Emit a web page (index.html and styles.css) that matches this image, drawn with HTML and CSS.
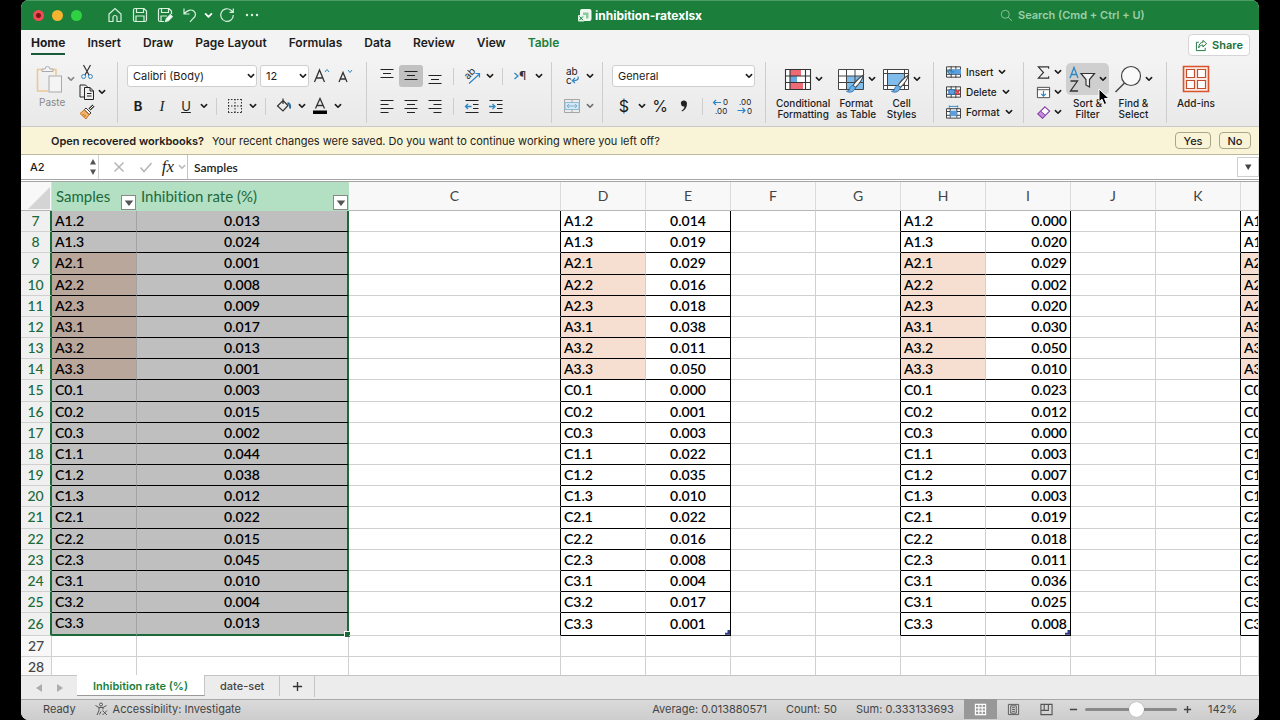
FILE: index.html
```html
<!DOCTYPE html>
<html lang="en">
<head>
	<meta charset="utf-8">
	<title>inhibition-ratexlsx</title>
	<link rel="stylesheet" href="styles.css">
</head>
<body>
	<!-- shared icons -->
	<svg class="defs" aria-hidden="true">
		<symbol id="chev" viewBox="0 0 8 8"><path d="M1.4 2.6L4 5.2l2.6-2.6" fill="none" stroke="currentColor" stroke-width="1.6" stroke-linecap="round" stroke-linejoin="round"/></symbol>
		<symbol id="brush" viewBox="0 0 20 20"><path d="M18.500 1C14 4 10 8 8 11.500l2.500 2C14 10 17.500 5.500 18.500 1z" fill="#fff" stroke="#444" stroke-width="1.100"/><path d="M8 11.500c-2 .2-3 1.500-3.300 3.200C4.500 16 3.500 17 1.500 17.300c3 1.600 7.500 1.200 9-3.800z" fill="#6fb1e4" stroke="#2f76b5"/></symbol>
	</svg>

	<div class="window">
		<header class="titlebar">
			<div class="title-left">
				<span class="light red"></span><span class="light yellow"></span><span class="light green"></span>
				<nav class="quick">
					<button aria-label="Home"><svg viewBox="0 0 16 16"><path d="M2 7l6-5.500L14 7v7.500h-4V10.500a2 2 0 0 0-4 0v4H2z"/></svg></button>
					<button aria-label="Save"><svg viewBox="0 0 16 16"><path d="M1.500 3a1.500 1.500 0 0 1 1.500-1.500h9L14.500 4v9a1.500 1.500 0 0 1-1.500 1.500H3A1.500 1.500 0 0 1 1.500 13zM4.500 1.500v4h7v-4M4 14.500V9h8v5.500"/></svg></button>
					<button aria-label="Save as"><svg viewBox="0 0 16 16"><path d="M7 14.500H3A1.500 1.500 0 0 1 1.500 13V3A1.500 1.500 0 0 1 3 1.500h9L14.500 4v3M4.500 1.500v4h7v-4M4 14.500V9h6"/><path d="M8.500 14.500l.8-2.800 4-4 2 2-4 4z" fill="#fff"/></svg></button>
					<button aria-label="Undo"><svg viewBox="0 0 16 16"><path d="M2 1.500v5.500h5.500M2.300 6.700C5 3.500 9 1.800 11.700 4c2.600 2.200 2.200 5-.3 7.200L8 14.800"/></svg></button>
					<button class="tiny" aria-label="Undo list"><svg viewBox="0 0 8 8"><use href="#chev"/></svg></button>
					<button aria-label="Redo"><svg viewBox="0 0 16 16"><path d="M14.300 8A6.300 6.300 0 1 1 12 3.200L14 5M14.300 1.500V5.300h-3.800"/></svg></button>
					<button aria-label="More"><svg viewBox="0 0 16 16"><g fill="#d9f0df" stroke="none"><circle cx="3" cy="8" r="1.200"/><circle cx="8" cy="8" r="1.200"/><circle cx="13" cy="8" r="1.200"/></g></svg></button>
				</nav>
			</div>
			<h1 class="doc-name">
				<svg viewBox="0 0 14 14"><rect x="2" y="1" width="11.500" height="12" rx="2" fill="#eef8f0"/><path d="M5 4.500h5.500v6H8V7H5z" fill="#8cc89c"/><rect x="0" y="7" width="6.500" height="6.500" rx="1" fill="#e3f3e7"/><path d="M1.500 8.500l3.400 3.600m0-3.600l-3.400 3.600" stroke="#1b7f3b"/></svg>
				inhibition-ratexlsx
			</h1>
			<label class="search">
				<svg viewBox="0 0 14 14"><circle cx="5.700" cy="5.700" r="4.300"/><path d="M9 9l4 4"/></svg>
				<input type="search" placeholder="Search (Cmd + Ctrl + U)" aria-label="Search">
			</label>
		</header>

		<nav class="menu">
			<a href="#" class="current">Home</a>
			<a href="#">Insert</a>
			<a href="#">Draw</a>
			<a href="#">Page Layout</a>
			<a href="#">Formulas</a>
			<a href="#">Data</a>
			<a href="#">Review</a>
			<a href="#">View</a>
			<a href="#" class="context">Table</a>
			<button class="share"><svg viewBox="0 0 14 14"><path d="M4 3.500H1.500v9h9.500V9.500M8.500 1.500l4 3.500-4 3.500V6.500C6.500 6.500 5 7.500 4 9.500c0-3.500 1.800-6 4.500-6z"/></svg>Share</button>
		</nav>

		<section class="ribbon">
			<div class="group clip">
				<button class="paste">
					<span class="pair">
						<svg class="i28" viewBox="0 0 28 28"><path d="M7 4.500H1.500V26H12M20 10V4.500h-5" fill="none" stroke="#ecc894" stroke-width="1.600"/><path d="M6 6.500V4h3a2.500 2.500 0 0 1 5 0h3v2.500z" fill="#f4f4f4" stroke="#aaa"/><rect x="13" y="11" width="12.500" height="16" fill="#f4f4f4" stroke="#aaa"/></svg>
						<svg class="dd-icon" viewBox="0 0 8 8"><use href="#chev"/></svg>
					</span>
					Paste
				</button>
				<div class="stack">
					<div class="line"><button class="sm" aria-label="Cut"><svg viewBox="0 0 16 16"><path d="M4.500 1l5.500 10M11.500 1L6 11" stroke="#333" stroke-width="1.200"/><circle cx="4.600" cy="12.500" r="2" stroke="#2b86c5"/><circle cx="11.400" cy="12.500" r="2" stroke="#2b86c5"/></svg></button></div>
					<div class="line"><button class="sm" aria-label="Copy"><svg viewBox="0 0 16 16"><path d="M5 13H1V1h5.500l2 2" stroke="#222"/><path d="M5.500 3.500h5.500l3.500 3.500v8.500h-9zM11 3.500V7h3.500M8 9.500h4.500M8 12h4.500" stroke="#222"/></svg></button><button class="dd" aria-label="Copy options"><svg viewBox="0 0 8 8"><use href="#chev"/></svg></button></div>
					<div class="line"><button class="sm" aria-label="Format painter"><svg viewBox="0 0 16 16"><path d="M14.500 1.500l-4 4" stroke="#333" stroke-width="3"/><path d="M14.500 1.500l-4 4" stroke="#fff"/><path d="M7 4l5 5-1.800 1.500L5.300 5.600z" fill="#fff" stroke="#333"/><path d="M5.200 6L10 10.700 7 15 1 9.500z" fill="#f3b36b" stroke="#c77a25"/><path d="M3.500 10.500l2 .5M5 12.500l2-1" stroke="#c77a25"/></svg></button></div>
				</div>
			</div>

			<div class="group font">
				<div class="row combos">
					<label class="combo wide"><select aria-label="Font"><option>Calibri (Body)</option></select><svg viewBox="0 0 8 8"><use href="#chev"/></svg></label>
					<label class="combo size"><select aria-label="Font size"><option>12</option></select><svg viewBox="0 0 8 8"><use href="#chev"/></svg></label>
					<button class="ib" aria-label="Increase font size"><svg viewBox="0 0 18 18"><path d="M2.500 15L7.500 3l5 12M4.200 11h6.600" stroke="#333" stroke-width="1.300"/><path d="M13 5l2-2.500L17 5" stroke="#2b86c5"/></svg></button>
					<button class="ib" aria-label="Decrease font size"><svg viewBox="0 0 18 18"><path d="M3 15L7 5.500l4 9.500M4.400 12h5.200" stroke="#333" stroke-width="1.300"/><path d="M12 3l2 2.500L16 3" stroke="#2b86c5"/></svg></button>
				</div>
				<div class="row">
					<button class="ib letter bold">B</button>
					<button class="ib letter ital">I</button>
					<button class="ib letter under">U</button>
					<button class="dd" aria-label="Underline options"><svg viewBox="0 0 8 8"><use href="#chev"/></svg></button>
					<i class="sep"></i>
					<button class="ib" aria-label="Borders"><svg viewBox="0 0 18 18"><path d="M2 2.500h14M2 9h14M2 15.500h14M2.500 2v14M9 2v14M15.500 2v14" stroke="#333" stroke-dasharray="1.500 1.500"/></svg></button>
					<button class="dd" aria-label="Border options"><svg viewBox="0 0 8 8"><use href="#chev"/></svg></button>
					<i class="sep"></i>
					<button class="ib" aria-label="Fill color"><svg viewBox="0 0 18 18"><path d="M8 3.500l5 5-5 5.500L2.500 9zM8 7V1.500" stroke="#333" stroke-width="1.200"/><path d="M12.500 6c2 .5 3 2.500 2.500 5.500" stroke="#2b6ea5" stroke-width="2"/></svg></button>
					<button class="dd" aria-label="Fill options"><svg viewBox="0 0 8 8"><use href="#chev"/></svg></button>
					<button class="ib" aria-label="Font color"><svg viewBox="0 0 18 18"><path d="M4.500 11.500L9 1.500l4.500 10M6 8.500h6" stroke="#333" stroke-width="1.300"/><rect x="2" y="13.500" width="14" height="3.500" fill="#000"/></svg></button>
					<button class="dd" aria-label="Font color options"><svg viewBox="0 0 8 8"><use href="#chev"/></svg></button>
				</div>
			</div>

			<div class="group align">
				<div class="row">
					<button class="ib" aria-label="Top align"><svg viewBox="0 0 18 18"><path d="M2.500 2.500h13M5 6.500h8M2.500 10.500h13" stroke="#222" stroke-width="1.200"/></svg></button>
					<button class="ib on" aria-label="Middle align"><svg viewBox="0 0 18 18"><path d="M2.500 4.500h13M5 8.500h8M2.500 12.500h13" stroke="#222" stroke-width="1.200"/></svg></button>
					<button class="ib" aria-label="Bottom align"><svg viewBox="0 0 18 18"><path d="M2.500 8.500h13M5 12.500h8M2.500 16.500h13" stroke="#222" stroke-width="1.200"/></svg></button>
					<i class="sep"></i>
					<button class="ib" aria-label="Orientation"><svg viewBox="0 0 18 18"><text x="2" y="10" font-size="10" fill="#333" transform="rotate(-45 7 8)">ab</text><path d="M6 16.500L16.500 7M12.500 6.500h4v4" stroke="#2b86c5" stroke-width="1.200"/></svg></button>
					<button class="dd" aria-label="Orientation options"><svg viewBox="0 0 8 8"><use href="#chev"/></svg></button>
					<i class="sep"></i>
					<button class="ib" aria-label="Text direction"><svg viewBox="0 0 18 18"><path d="M2.500 6l3.500 3-3.500 3" stroke="#2b86c5" stroke-width="1.300"/><text x="7" y="13" font-size="12" fill="#333">¶</text></svg></button>
					<button class="dd" aria-label="Direction options"><svg viewBox="0 0 8 8"><use href="#chev"/></svg></button>
				</div>
				<div class="row">
					<button class="ib" aria-label="Align left"><svg viewBox="0 0 18 18"><path d="M2.500 3.500h13M2.500 7.500h8M2.500 11.500h13M2.500 15.500h8" stroke="#222" stroke-width="1.200"/></svg></button>
					<button class="ib" aria-label="Center"><svg viewBox="0 0 18 18"><path d="M2.500 3.500h13M5 7.500h8M2.500 11.500h13M5 15.500h8" stroke="#222" stroke-width="1.200"/></svg></button>
					<button class="ib" aria-label="Align right"><svg viewBox="0 0 18 18"><path d="M2.500 3.500h13M7.500 7.500h8M2.500 11.500h13M7.500 15.500h8" stroke="#222" stroke-width="1.200"/></svg></button>
					<i class="sep"></i>
					<button class="ib" aria-label="Decrease indent"><svg viewBox="0 0 18 18"><path d="M2.500 3.500h13M10 7.500h5.500M10 11.500h5.500M2.500 15.500h13" stroke="#222" stroke-width="1.200"/><path d="M8.500 9.500H3M5 7L2.500 9.500 5 12" stroke="#2b86c5" stroke-width="1.300"/></svg></button>
					<button class="ib" aria-label="Increase indent"><svg viewBox="0 0 18 18"><path d="M2.500 3.500h13M10 7.500h5.500M10 11.500h5.500M2.500 15.500h13" stroke="#222" stroke-width="1.200"/><path d="M2 9.500h5.500M5.500 7L8 9.500 5.500 12" stroke="#2b86c5" stroke-width="1.300"/></svg></button>
				</div>
			</div>

			<div class="group wrap">
				<div class="row">
					<button class="ib" aria-label="Wrap text"><svg viewBox="0 0 18 18"><text x="3" y="8" font-size="10" fill="#222">ab</text><text x="3" y="17" font-size="10" fill="#222">c</text><path d="M15 9.500c1 3-1 4.500-5.500 4.200M12 11l-2.700 2.700L12 16" stroke="#2b86c5" stroke-width="1.200"/></svg></button>
					<button class="dd" aria-label="Wrap options"><svg viewBox="0 0 8 8"><use href="#chev"/></svg></button>
				</div>
				<div class="row faded">
					<button class="ib" aria-label="Merge cells"><svg viewBox="0 0 18 18"><path d="M1.500 2.500h15v13h-15z" stroke="#777"/><rect x="2" y="5.500" width="14" height="7" fill="#c8e6f5" stroke="#4a9fcb"/><path d="M9 2.500v3M9 12.500v3" stroke="#777"/><path d="M4 9h10M6 7L4 9l2 2M12 7l2 2-2 2" stroke="#2b86c5"/></svg></button>
					<button class="dd" aria-label="Merge options"><svg viewBox="0 0 8 8"><use href="#chev"/></svg></button>
				</div>
			</div>

			<div class="group number">
				<div class="row">
					<label class="combo full"><select aria-label="Number format"><option>General</option></select><svg viewBox="0 0 8 8"><use href="#chev"/></svg></label>
				</div>
				<div class="row">
					<button class="ib letter sign">$</button>
					<button class="dd" aria-label="Currency options"><svg viewBox="0 0 8 8"><use href="#chev"/></svg></button>
					<button class="ib letter sign">%</button>
					<button class="ib" aria-label="Comma style"><svg viewBox="0 0 18 18"><path d="M8.500 3.500a3 3 0 0 1 3.500 3c0 4-2 6.500-5 8l-.5-.8c2-1.200 2.800-2.500 2.900-4.200A3 3 0 0 1 8.500 3.500z" fill="#222"/></svg></button>
					<i class="sep"></i>
					<button class="ib" aria-label="Increase decimal"><svg viewBox="0 0 18 18"><text x="11" y="8" font-size="8" fill="#222">0</text><text x="3" y="17" font-size="8" fill="#222">.00</text><path d="M1.500 5.500H9M4 3L1.500 5.500 4 8" stroke="#2b86c5" stroke-width="1.200"/></svg></button>
					<button class="ib" aria-label="Decrease decimal"><svg viewBox="0 0 18 18"><text x="3" y="8" font-size="8" fill="#222">.00</text><text x="11" y="17" font-size="8" fill="#222">0</text><path d="M1.500 13.500H9M6.500 11L9 13.500l-2.500 2.500" stroke="#2b86c5" stroke-width="1.200"/></svg></button>
				</div>
			</div>

			<div class="group styles">
				<button class="big">
					<span class="pair"><svg class="i28" viewBox="0 0 28 28"><rect x="1.500" y="4.500" width="25" height="20" fill="#fff"/><path d="M6 5h11v6H6zM6 17.500h13v6.500H6z" fill="#ee6a75"/><path d="M6 11h7v6.500H6z" fill="#6aa9e0"/><path d="M1.500 4.500h25v20h-25zM1.500 11h25M1.500 17.500h25M6 4.500v20M21.500 4.500v20" fill="none" stroke="#333" stroke-width="1.100"/></svg><svg class="dd-icon" viewBox="0 0 8 8"><use href="#chev"/></svg></span>
					<span>Conditional<br>Formatting</span>
				</button>
				<button class="big">
					<span class="pair"><svg class="i28" viewBox="0 0 28 28"><rect x="1.500" y="4.500" width="25" height="20" fill="#fff"/><path d="M9.500 11h17v13.500h-17z" fill="#80bdeb"/><path d="M1.500 4.500h25v20h-25zM1.500 11h25M1.500 17.500h25M9.500 4.500v20M18 4.500v20" fill="none" stroke="#444"/><use href="#brush" x="8" y="9" width="20" height="20"/></svg><svg class="dd-icon" viewBox="0 0 8 8"><use href="#chev"/></svg></span>
					<span>Format<br>as Table</span>
				</button>
				<button class="big">
					<span class="pair"><svg class="i28" viewBox="0 0 28 28"><rect x="1.500" y="4.500" width="25" height="20" fill="#fff"/><path d="M5.500 9h17v11h-17z" fill="#80bdeb"/><path d="M1.500 4.500h25v20h-25zM1.500 8.500h25M1.500 20.500h25M5.500 4.500v20M22.500 4.500v20" fill="none" stroke="#444"/><use href="#brush" x="8" y="9" width="20" height="20"/></svg><svg class="dd-icon" viewBox="0 0 8 8"><use href="#chev"/></svg></span>
					<span>Cell<br>Styles</span>
				</button>
			</div>

			<div class="group cells">
				<button class="cellop"><svg viewBox="0 0 16 14"><path d="M.5 1.500h15v11H.5zM.5 5h15M.5 9.500h15M5.500 1v12M10.500 1v12" fill="#fff" stroke="#333"/><path d="M6 4h10v5.500H6z" fill="#5d9fdd"/><path d="M9 6.800H2M4.500 4L1.700 6.800l2.800 2.700" fill="none" stroke="#2b86c5" stroke-width="1.300"/></svg>Insert<svg class="dd-icon" viewBox="0 0 8 8"><use href="#chev"/></svg></button>
				<button class="cellop"><svg viewBox="0 0 16 14"><path d="M.5 1.500h15v11H.5zM.5 5h15M.5 9.500h15M5.500 1v12M10.500 1v12" fill="#fff" stroke="#333"/><path d="M3 4.500h6v5H3z" fill="#5d9fdd" stroke="#2b6ea5"/><path d="M10 4.500l5 5.500m0-5.500l-5 5.500" fill="none" stroke="#d9363e" stroke-width="1.500"/></svg>Delete<svg class="dd-icon" viewBox="0 0 8 8"><use href="#chev"/></svg></button>
				<button class="cellop"><svg viewBox="0 0 16 14"><path d="M.5 3.500h15v10H.5zM.5 6.500h15M.5 10.500h15M4.500 3v10M11.500 3v10" fill="#fff" stroke="#333"/><path d="M4.500 5.500h7v6h-7z" fill="#5d9fdd"/><path d="M3.500 1h9M3.500 0v2.500M12.500 0v2.500" fill="none" stroke="#2b86c5"/></svg>Format<svg class="dd-icon" viewBox="0 0 8 8"><use href="#chev"/></svg></button>
			</div>

			<div class="group edit">
				<div class="stack">
					<div class="line"><button class="sm" aria-label="AutoSum"><svg viewBox="0 0 16 16"><path d="M13.500 4V2h-11L8 8l-5.500 6h11v-2" stroke="#333" stroke-width="1.200"/></svg></button><button class="dd" aria-label="Sum options"><svg viewBox="0 0 8 8"><use href="#chev"/></svg></button></div>
					<div class="line"><button class="sm" aria-label="Fill"><svg viewBox="0 0 16 16"><path d="M1.500 2.500h13v11h-13zM1.500 5h13" fill="#fff" stroke="#444"/><path d="M8 6v6M5.500 9.500L8 12l2.500-2.500" stroke="#2b86c5" stroke-width="1.300"/></svg></button><button class="dd" aria-label="Fill options"><svg viewBox="0 0 8 8"><use href="#chev"/></svg></button></div>
					<div class="line"><button class="sm" aria-label="Clear"><svg viewBox="0 0 16 16"><path d="M9.500 2l5 4.500L7 14 2 9.500z" fill="#fff" stroke="#843aa5" stroke-width="1.200"/><path d="M5 6.500l5 4.500-3 3-5-4.500z" fill="#c58bdc" stroke="#843aa5"/></svg></button><button class="dd" aria-label="Clear options"><svg viewBox="0 0 8 8"><use href="#chev"/></svg></button></div>
				</div>
				<button class="big sort">
					<span class="pair"><svg class="i28" viewBox="0 0 28 28"><path d="M2 13L6 2.500 10 13M3.500 9.500h5" fill="none" stroke="#2b86c5" stroke-width="1.300"/><path d="M2.500 16h7l-7 10h7.500" fill="none" stroke="#333" stroke-width="1.300"/><path d="M13 8.500h13.500l-5 6v7.500l-3.500-2v-5.500z" fill="#f2f2f2" stroke="#333" stroke-width="1.200"/></svg><svg class="dd-icon" viewBox="0 0 8 8"><use href="#chev"/></svg></span>
					<span>Sort &amp;<br>Filter</span>
					<svg class="pointer" viewBox="0 0 12 18"><path d="M1 1v13l3-2.800L6.200 16.500l2.500-1L6.500 10.500H11z" fill="#000" stroke="#fff"/></svg>
				</button>
				<button class="big">
					<span class="pair"><svg class="i28" viewBox="0 0 28 28"><circle cx="17" cy="11" r="9.500" fill="#fafafa" stroke="#444" stroke-width="1.200"/><path d="M10.500 18L1.500 27" stroke="#444" stroke-width="1.400"/></svg><svg class="dd-icon" viewBox="0 0 8 8"><use href="#chev"/></svg></span>
					<span>Find &amp;<br>Select</span>
				</button>
			</div>

			<div class="group addins">
				<button class="big">
					<span class="pair"><svg class="i28" viewBox="0 0 28 28"><path d="M1.500 1.500h25v25h-25z" fill="#fbe9e4" stroke="#d9532c" stroke-width="1.600"/><path d="M4.500 4.500h8v8h-8zM15.500 4.500h8v8h-8zM4.500 15.500h8v8h-8zM15.500 15.500h8v8h-8z" fill="#fff" stroke="#c2502f" stroke-width="1.200"/></svg></span>
					<span>Add-ins</span>
				</button>
			</div>
		</section>

		<section class="notice">
			<strong>Open recovered workbooks?</strong>
			<span>Your recent changes were saved. Do you want to continue working where you left off?</span>
			<button class="first">Yes</button>
			<button>No</button>
		</section>

		<section class="formula">
			<div class="namebox">
				<input value="A2" aria-label="Name box">
				<svg viewBox="0 0 8 18"><path d="M1 6.500L4 1l3 5.500zM1 11.500h6L4 17z" fill="#555"/></svg>
			</div>
			<button aria-label="Cancel"><svg viewBox="0 0 14 14"><path d="M2.500 2.500l9 9m0-9l-9 9" stroke="#b5b5b5" stroke-width="1.500"/></svg></button>
			<button aria-label="Enter"><svg viewBox="0 0 14 14"><path d="M1.500 7.500l3.500 4 7.500-8.500" stroke="#b5b5b5" stroke-width="1.500"/></svg></button>
			<button class="fx">fx</button>
			<svg class="fx-chev" viewBox="0 0 8 8"><use href="#chev"/></svg>
			<input class="fx-input" value="Samples" aria-label="Formula">
			<button class="expand" aria-label="Expand formula bar"><svg viewBox="0 0 14 14"><path d="M4 4.500h6.500L7.200 10z" fill="#444"/></svg></button>
		</section>

		<main class="sheet">
			<table>
				<colgroup><col class="c-num"><col class="c-std"><col class="c-wide"><col class="c-wide"><col class="c-std"><col class="c-std"><col class="c-std"><col class="c-std"><col class="c-std"><col class="c-std"><col class="c-std"><col class="c-std"><col></colgroup>
				<thead>
					<tr>
						<th class="corner"><svg viewBox="0 0 22 22"><path d="M22 0v22H0z" fill="#d4d4d4"/></svg></th>
						<th class="field"><div>Samples<button aria-label="Filter samples"><svg viewBox="0 0 14 14"><path d="M2 4h10L7 10.500z" fill="#555"/></svg></button></div></th>
						<th class="field"><div>Inhibition rate (%)<button aria-label="Filter rate"><svg viewBox="0 0 14 14"><path d="M2 4h10L7 10.500z" fill="#555"/></svg></button></div></th>
						<th>C</th><th>D</th><th>E</th><th>F</th><th>G</th><th>H</th><th>I</th><th>J</th><th>K</th><th></th>
					</tr>
				</thead>
				<tbody class="data">
					<tr><th>7</th><td>A1.2</td><td>0.013</td><td></td><td>A1.2</td><td>0.014</td><td></td><td></td><td>A1.2</td><td>0.000</td><td></td><td></td><td>A1.2</td></tr>
					<tr><th>8</th><td>A1.3</td><td>0.024</td><td></td><td>A1.3</td><td>0.019</td><td></td><td></td><td>A1.3</td><td>0.020</td><td></td><td></td><td>A1.3</td></tr>
					<tr class="mark"><th>9</th><td>A2.1</td><td>0.001</td><td></td><td>A2.1</td><td>0.029</td><td></td><td></td><td>A2.1</td><td>0.029</td><td></td><td></td><td>A2.1</td></tr>
					<tr class="mark"><th>10</th><td>A2.2</td><td>0.008</td><td></td><td>A2.2</td><td>0.016</td><td></td><td></td><td>A2.2</td><td>0.002</td><td></td><td></td><td>A2.2</td></tr>
					<tr class="mark"><th>11</th><td>A2.3</td><td>0.009</td><td></td><td>A2.3</td><td>0.018</td><td></td><td></td><td>A2.3</td><td>0.020</td><td></td><td></td><td>A2.3</td></tr>
					<tr class="mark"><th>12</th><td>A3.1</td><td>0.017</td><td></td><td>A3.1</td><td>0.038</td><td></td><td></td><td>A3.1</td><td>0.030</td><td></td><td></td><td>A3.1</td></tr>
					<tr class="mark"><th>13</th><td>A3.2</td><td>0.013</td><td></td><td>A3.2</td><td>0.011</td><td></td><td></td><td>A3.2</td><td>0.050</td><td></td><td></td><td>A3.2</td></tr>
					<tr class="mark"><th>14</th><td>A3.3</td><td>0.001</td><td></td><td>A3.3</td><td>0.050</td><td></td><td></td><td>A3.3</td><td>0.010</td><td></td><td></td><td>A3.3</td></tr>
					<tr><th>15</th><td>C0.1</td><td>0.003</td><td></td><td>C0.1</td><td>0.000</td><td></td><td></td><td>C0.1</td><td>0.023</td><td></td><td></td><td>C0.1</td></tr>
					<tr><th>16</th><td>C0.2</td><td>0.015</td><td></td><td>C0.2</td><td>0.001</td><td></td><td></td><td>C0.2</td><td>0.012</td><td></td><td></td><td>C0.2</td></tr>
					<tr><th>17</th><td>C0.3</td><td>0.002</td><td></td><td>C0.3</td><td>0.003</td><td></td><td></td><td>C0.3</td><td>0.000</td><td></td><td></td><td>C0.3</td></tr>
					<tr><th>18</th><td>C1.1</td><td>0.044</td><td></td><td>C1.1</td><td>0.022</td><td></td><td></td><td>C1.1</td><td>0.003</td><td></td><td></td><td>C1.1</td></tr>
					<tr><th>19</th><td>C1.2</td><td>0.038</td><td></td><td>C1.2</td><td>0.035</td><td></td><td></td><td>C1.2</td><td>0.007</td><td></td><td></td><td>C1.2</td></tr>
					<tr><th>20</th><td>C1.3</td><td>0.012</td><td></td><td>C1.3</td><td>0.010</td><td></td><td></td><td>C1.3</td><td>0.003</td><td></td><td></td><td>C1.3</td></tr>
					<tr><th>21</th><td>C2.1</td><td>0.022</td><td></td><td>C2.1</td><td>0.022</td><td></td><td></td><td>C2.1</td><td>0.019</td><td></td><td></td><td>C2.1</td></tr>
					<tr><th>22</th><td>C2.2</td><td>0.015</td><td></td><td>C2.2</td><td>0.016</td><td></td><td></td><td>C2.2</td><td>0.018</td><td></td><td></td><td>C2.2</td></tr>
					<tr><th>23</th><td>C2.3</td><td>0.045</td><td></td><td>C2.3</td><td>0.008</td><td></td><td></td><td>C2.3</td><td>0.011</td><td></td><td></td><td>C2.3</td></tr>
					<tr><th>24</th><td>C3.1</td><td>0.010</td><td></td><td>C3.1</td><td>0.004</td><td></td><td></td><td>C3.1</td><td>0.036</td><td></td><td></td><td>C3.1</td></tr>
					<tr><th>25</th><td>C3.2</td><td>0.004</td><td></td><td>C3.2</td><td>0.017</td><td></td><td></td><td>C3.1</td><td>0.025</td><td></td><td></td><td>C3.2</td></tr>
					<tr class="last"><th>26</th><td>C3.3</td><td>0.013<i class="handle"></i></td><td></td><td>C3.3</td><td>0.001<i class="resize"></i></td><td></td><td></td><td>C3.3</td><td>0.008<i class="resize"></i></td><td></td><td></td><td>C3.3</td></tr>
				</tbody>
				<tbody>
					<tr><th>27</th><td></td><td></td><td></td><td></td><td></td><td></td><td></td><td></td><td></td><td></td><td></td><td></td></tr>
					<tr><th>28</th><td></td><td></td><td></td><td></td><td></td><td></td><td></td><td></td><td></td><td></td><td></td><td></td></tr>
				</tbody>
			</table>
		</main>

		<nav class="tabs">
			<button class="arrow" aria-label="Previous sheet"><svg viewBox="0 0 8 10"><path d="M7 1v8L1 5z"/></svg></button>
			<button class="arrow" aria-label="Next sheet"><svg viewBox="0 0 8 10"><path d="M1 1v8l6-4z"/></svg></button>
			<a href="#" class="tab active">Inhibition rate (%)</a>
			<a href="#" class="tab">date-set</a>
			<button class="add" aria-label="Add sheet"><svg viewBox="0 0 12 12"><path d="M6 1v10M1 6h10" stroke="#333" stroke-width="1.500"/></svg></button>
		</nav>

		<footer class="status">
			<span class="ready">Ready</span>
			<svg class="acc" viewBox="0 0 14 14"><circle cx="7" cy="2.500" r="1.500"/><path d="M1.500 3.500L5 5.500v3l-2 4.500M12.500 3.500L9 5.500v2M5 5.500h4M5.500 12.500L7 9.500M8.500 8.500l4.500 4.500m0-4.500L8.500 13"/></svg>
			<span>Accessibility: Investigate</span>
			<span class="stat avg">Average: 0.013880571</span>
			<span class="stat">Count: 50</span>
			<span class="stat">Sum: 0.333133693</span>
			<button class="view on" aria-label="Normal view"><svg viewBox="0 0 14 14"><path d="M1.500 1.500h11v11h-11zM1.500 5.200h11M1.500 8.800h11M5.200 1.500v11M8.800 1.500v11" stroke="#fff" stroke-width="1.200"/></svg></button>
			<button class="view" aria-label="Page layout"><svg viewBox="0 0 14 14"><path d="M1.500 1.500h11v11h-11zM4 3h6v8H4zM5.500 5h3M5.500 7h3M5.500 9h3" stroke="#555"/></svg></button>
			<button class="view" aria-label="Page break preview"><svg viewBox="0 0 14 14"><path d="M1 1.500h12v11H1zM4.500 1.500V8H1M9 1.500V8H4.500" stroke="#555" stroke-width="1.200"/></svg></button>
			<button class="step" aria-label="Zoom out"><svg viewBox="0 0 10 10"><path d="M1 5h8" stroke="#444" stroke-width="1.600"/></svg></button>
			<input type="range" min="0" max="100" value="57" aria-label="Zoom">
			<button class="step" aria-label="Zoom in"><svg viewBox="0 0 10 10"><path d="M1 5h8M5 1v8" stroke="#444" stroke-width="1.600"/></svg></button>
			<span class="percent">142%</span>
		</footer>
	</div>
</body>
</html>
```
FILE: styles.css
```css
* {
  box-sizing: border-box;
}
body {
  margin: 0;
  padding: 0 21px;
  background-color: #000;
  font-family: Inter, "Liberation Sans", sans-serif;
  font-size: 12px;
  color: #1d1d1d;
}
button, input, select {
  margin: 0;
  padding: 0;
  border: 0;
  background: none;
  font: inherit;
  color: inherit;
}
button {
  display: flex;
  align-items: center;
  justify-content: center;
  flex: none;
}
a {
  color: inherit;
  text-decoration: none;
}
svg {
  display: block;
  flex: none;
  fill: none;
}
.defs {
  position: absolute;
  width: 0;
  height: 0;
}
.window {
  display: flex;
  flex-direction: column;
  height: 100vh;
  background-color: #fff;
  border-radius: 8px;
  overflow: hidden;
}

/* title bar */
.titlebar {
  display: grid;
  grid-template-columns: 1fr auto 1fr;
  align-items: center;
  height: 30px;
  flex: none;
  padding-bottom: 1px;
  background-color: #1b7f3b;
  border-top: 1px solid #4d9e66;
  color: #fff;
}
.title-left {
  display: flex;
  align-items: center;
  gap: 8px;
  padding-left: 12px;
}
.light {
  width: 11px;
  height: 11px;
  border-radius: 50%;
}
.red {
  background: radial-gradient(circle, #7d1218 0 2px, #ee4d52 3px);
}
.yellow {
  background-color: #f5b32f;
}
.green {
  background-color: #30d142;
}
.quick {
  display: flex;
  align-items: center;
  gap: 9px;
  padding-left: 17px;
}
.quick svg {
  width: 16px;
  height: 16px;
  stroke: #d9f0df;
  stroke-width: 1.2;
}
.quick .tiny svg {
  width: 9px;
  height: 9px;
}
.quick .tiny {
  margin: 0 -3px;
}
.doc-name {
  display: flex;
  align-items: center;
  gap: 3px;
  margin: 0;
  font-size: 12px;
  font-weight: 700;
}
.doc-name svg {
  width: 14px;
  height: 14px;
}
.search {
  display: flex;
  align-items: center;
  gap: 5px;
  justify-self: end;
  width: 259px;
}
.search svg {
  width: 13px;
  height: 13px;
  stroke: #8cc49b;
}
.search input {
  flex: 1;
  min-width: 0;
  font-size: 11px;
  font-weight: 600;
}
.search input::placeholder {
  color: #9ccfa9;
}

/* ribbon tabs */
.menu {
  display: flex;
  align-items: center;
  gap: 22px;
  height: 30px;
  flex: none;
  padding: 0 9px 0 10px;
  background-color: #f3f3f3;
  font-weight: 600;
}
.menu a {
  align-self: flex-start;
  padding: 5px 0 4px;
  line-height: 16px;
}
.menu .current {
  border-bottom: 2px solid #185c37;
  padding-bottom: 2px;
  font-weight: 700;
}
.menu .context {
  color: #1b7f3b;
}
.share {
  gap: 4px;
  width: 62px;
  height: 22px;
  margin-left: auto;
  background-color: #fff;
  border: 1px solid #d5d5d5;
  border-radius: 4px;
  font-size: 11px;
  color: #17703a;
}
.share svg {
  width: 13px;
  height: 13px;
  stroke: #17703a;
}

/* ribbon */
.ribbon {
  display: flex;
  height: 67px;
  flex: none;
  padding: 2px 0 3px;
  background: linear-gradient(#f3f3f3, #e9e9e9);
  border-bottom: 1px solid #c9c9c9;
}
.group {
  flex: none;
  border-right: 1px solid #cdcdcd;
  padding-top: 3px;
}
.row {
  display: flex;
  align-items: center;
  height: 22px;
  margin-bottom: 8px;
}
.ib {
  width: 24px;
  height: 22px;
}
.ib svg {
  width: 18px;
  height: 18px;
}
.ib.on {
  background-color: #c1c1c1;
  border-radius: 3px;
}
.dd {
  width: 12px;
  height: 20px;
}
.dd svg, .dd-icon {
  width: 8px;
  height: 8px;
}
.sep {
  width: 1px;
  height: 17px;
  margin: 0 6px;
  background-color: #cdcdcd;
}
.letter {
  font-size: 13px;
}
.bold {
  font-weight: 700;
}
.ital {
  font-family: "Liberation Serif", serif;
  font-style: italic;
  font-size: 15px;
}
.under {
  text-decoration: underline;
}
.sign {
  font-size: 16px;
}
.faded {
  opacity: 0.6;
}
.combo {
  display: grid;
  align-items: center;
  height: 22px;
}
.combo select, .combo svg {
  grid-area: 1 / 1;
}
.combo select {
  appearance: none;
  width: 100%;
  height: 22px;
  padding-left: 5px;
  background-color: #fff;
  border: 1px solid #cfcfcf;
  border-radius: 3px;
  font-size: 11px;
}
.combo svg {
  width: 8px;
  height: 8px;
  margin-right: 2px;
  justify-self: end;
  pointer-events: none;
}
.wide {
  width: 130px;
  margin-right: 3px;
}
.size {
  width: 49px;
}
.full {
  width: 143px;
}
.clip {
  display: flex;
  width: 97px;
  padding-left: 12px;
}
.font {
  width: 249px;
  padding-left: 8px;
}
.combos {
  padding-left: 1px;
}
.align {
  width: 185px;
  padding-left: 8px;
}
.wrap {
  width: 51px;
  padding-left: 8px;
}
.number {
  width: 163px;
  padding-left: 9px;
}
.pair {
  display: flex;
  align-items: center;
  gap: 3px;
}
.i28 {
  width: 28px;
  height: 28px;
}
.paste {
  flex-direction: column;
  justify-content: flex-start;
  align-items: flex-start;
  width: 43px;
  font-size: 10px;
  line-height: 18px;
  color: #888;
}
.paste .pair {
  margin-left: 3px;
}
.paste {
  text-indent: 6px;
}
.stack {
  display: flex;
  flex-direction: column;
  margin-top: -3px;
}
.line {
  display: flex;
  align-items: center;
  height: 20px;
}
.clip .line, .edit .line {
  padding-left: 2px;
}
.sm {
  width: 18px;
  height: 18px;
}
.sm svg {
  width: 16px;
  height: 16px;
}
.edit .sm svg {
  width: 15px;
  height: 15px;
}
.big {
  position: relative;
  flex-direction: column;
  justify-content: flex-start;
  font-size: 10px;
  font-weight: 500;
  line-height: 11px;
}
.big .pair {
  height: 28px;
  margin-bottom: 5px;
}
.styles {
  display: flex;
  gap: 6px;
  width: 168px;
  padding-left: 10px;
}
.cells {
  width: 90px;
  padding-top: 0;
  padding-left: 12px;
}
.cellop {
  gap: 5px;
  height: 20px;
  font-size: 10px;
  font-weight: 500;
}
.cellop svg {
  width: 15px;
  height: 14px;
}
.cellop .dd-icon {
  width: 8px;
  height: 8px;
}
.edit {
  display: flex;
  width: 143px;
  padding-left: 8px;
}
.sort {
  margin: 0 7px 0 4px;
}
.sort .pair {
  background-color: #cfcfcf;
  border-radius: 3px;
  box-shadow: 0 0 0 2px #cfcfcf;
}
.pointer {
  position: absolute;
  left: 30px;
  top: 23px;
  width: 12px;
  height: 18px;
}
.addins {
  border-right: 0;
  padding-left: 10px;
}

/* recovery message */
.notice {
  display: flex;
  align-items: center;
  gap: 8px;
  height: 28px;
  flex: none;
  padding: 0 8px 0 30px;
  background-color: #f9f4d7;
  border-bottom: 1px solid #bdb99c;
  font-size: 11px;
}
.notice strong {
  font-weight: 600;
}
.notice button {
  width: 32px;
  height: 17px;
  border: 1px solid #a9a587;
  border-radius: 4px;
  font-weight: 500;
}
.notice .first {
  width: 36px;
  margin-left: auto;
}

/* formula bar */
.formula {
  display: flex;
  align-items: center;
  height: 27px;
  flex: none;
  border-bottom: 3px double #a5a5a5;
}
.namebox {
  display: flex;
  align-items: center;
  align-self: stretch;
  width: 78px;
  padding: 0 1px 0 9px;
  border-right: 1px solid #cfcfcf;
}
.namebox input {
  flex: 1;
  min-width: 0;
  font-size: 11px;
  font-weight: 500;
}
.namebox svg {
  width: 8px;
  height: 18px;
}
.formula button {
  width: 27px;
}
.formula button svg {
  width: 14px;
  height: 14px;
}
.formula .namebox + button {
  margin-left: 6px;
}
.formula .fx {
  width: 18px;
  font-family: "Liberation Serif", serif;
  font-style: italic;
  font-size: 17px;
  line-height: 20px;
}
.fx-chev {
  width: 8px;
  height: 8px;
  margin: 0 1px;
  color: #bbb;
}
.fx-input {
  flex: 1;
  align-self: stretch;
  min-width: 0;
  padding-left: 6px;
  border-left: 1px solid #c4c4c4;
  font-family: Lato, sans-serif;
  font-size: 12px;
  font-weight: 600;
}
.formula .expand {
  width: 22px;
  height: 20px;
  border: 1px solid #cfcfcf;
}

/* grid, the last row runs under the sheet tabs */
.sheet {
  flex: 1;
  min-height: 0;
  overflow: hidden;
}
table {
  width: 100%;
  height: calc(100% + 3px);
  table-layout: fixed;
  border-collapse: separate;
  border-spacing: 0;
  font-family: Lato, "Open Sans", sans-serif;
  font-size: 14px;
  line-height: 18px;
  font-variant-ligatures: none;
}
.c-num {
  width: 31px;
}
.c-std {
  width: 85px;
}
.c-wide {
  width: 212px;
}
th, td {
  padding: 0;
  overflow: hidden;
  white-space: nowrap;
  border-right: 1px solid #d0d0d0;
  border-bottom: 1px solid #d0d0d0;
}
th {
  font-weight: 400;
  color: #444;
  background-color: #f8f8f8;
}
thead th {
  height: 29px;
  border-bottom-color: #b5b5b5;
  border-right-color: #dcdcdc;
}
.corner svg {
  width: 22px;
  height: 22px;
  margin: 4px 0 0 7px;
}
.field {
  background-color: #b3dfc3;
  border-color: #b3dfc3;
  color: #1c6a3a;
  font-size: 15px;
}
.field div {
  display: flex;
  align-items: center;
  justify-content: space-between;
  height: 28px;
  padding-left: 4px;
}
.field button {
  align-self: flex-end;
  width: 15px;
  height: 15px;
  background-color: #fff;
  border: 1px solid #888;
}
.field svg {
  width: 12px;
  height: 12px;
}
tbody th {
  font-size: 14px;
  font-weight: 500;
}
td {
  padding: 0 3px;
  text-align: center;
}
.data td {
  font-weight: 600;
  color: #000;
}
.data th {
  color: #1c6a3a;
  background-color: #f0f0f0;
  border-right: 2px solid #1c6a3a;
}
.data td:nth-child(2), .data td:nth-child(3) {
  background-color: #bfbfbf;
  border-bottom-color: #000;
}
.data td:nth-child(2) {
  border-right-color: #a3a3a3;
}
.data td:nth-child(3) {
  border-right: 2px solid #1c6a3a;
}
.data td:nth-child(2), .data td:nth-child(5), .data td:nth-child(9), .data td:nth-child(13) {
  text-align: left;
  border-bottom-color: #000;
}
.data td:nth-child(6), .data td:nth-child(10) {
  border-right-color: #000;
  border-bottom-color: #000;
}
.data td:nth-child(10) {
  text-align: right;
}
.data td:nth-child(4), .data td:nth-child(8), .data td:nth-child(12) {
  border-right-color: #000;
}
.data .mark td:nth-child(2) {
  background-color: #b9a79b;
}
.data .mark td:nth-child(5), .data .mark td:nth-child(9), .data .mark td:nth-child(13) {
  background-color: #f6dfd0;
}
.data .last td {
  position: relative;
  overflow: visible;
}
.data .last td:last-child {
  overflow: hidden;
}
.data .last td:nth-child(2), .data .last td:nth-child(3) {
  border-bottom: 2px solid #1c6a3a;
}
.handle {
  position: absolute;
  right: -3px;
  bottom: -3px;
  width: 6px;
  height: 6px;
  background-color: #1c6a3a;
  border: 1px solid #fff;
  border-width: 1px 0 0 1px;
}
.resize {
  position: absolute;
  right: 0;
  bottom: 0;
  width: 5px;
  height: 5px;
  background-color: #2c3a8c;
  clip-path: polygon(100% 0, 100% 100%, 0 100%, 0 60%, 50% 60%, 50% 0);
}

/* sheet tabs */
.tabs {
  display: flex;
  align-items: flex-start;
  height: 24px;
  flex: none;
  padding-left: 7px;
  background-color: #ececec;
  border-top: 1px solid #c5c5c5;
  font-size: 11px;
  font-weight: 500;
}
.tabs .arrow {
  width: 21px;
  height: 23px;
}
.arrow svg {
  width: 8px;
  height: 10px;
  fill: #adadad;
}
.tab {
  padding: 0 15px;
  line-height: 21px;
  height: 20px;
  border-right: 1px solid #c5c5c5;
  color: #444;
}
.tab.active {
  height: 21px;
  margin-top: -1px;
  margin-left: 7px;
  padding: 0 16px;
  line-height: 22px;
  background-color: #fff;
  border-bottom: 1px solid #9a9a9a;
  font-weight: 600;
  color: #1b7f3b;
}
.add {
  width: 35px;
  height: 21px;
  border-right: 1px solid #c5c5c5;
}
.add svg {
  width: 11px;
  height: 11px;
}

/* status bar */
.status {
  display: flex;
  align-items: center;
  height: 21px;
  flex: none;
  padding: 0 0 2px 22px;
  border-top: 1px solid #a8a8a8;
  background: linear-gradient(#dadada, #cdcdcd);
  font-size: 11px;
  color: #444;
}
.status span {
  font-size: 11px;
}
.ready {
  margin-right: 18px;
}
.acc {
  width: 14px;
  height: 14px;
  margin-right: 5px;
  stroke: #555;
}
.stat {
  margin-right: 19px;
}
.avg {
  margin-left: auto;
}
.stat + .view {
  margin-left: -9px;
}
.view {
  width: 33px;
  height: 20px;
}
.view.on {
  background-color: #989898;
}
.view svg {
  width: 13px;
  height: 13px;
}
.step {
  width: 16px;
  height: 20px;
  margin: 0 3px;
}
.step svg {
  width: 9px;
  height: 9px;
}
.status input {
  appearance: none;
  width: 92px;
  height: 3px;
  background-color: #8a8a8a;
  border-radius: 2px;
}
.status input::-webkit-slider-thumb {
  appearance: none;
  width: 15px;
  height: 15px;
  background-color: #fff;
  border-radius: 50%;
  box-shadow: 0 0 1px #777;
}
.percent {
  margin: 0 22px 0 9px;
}
```
